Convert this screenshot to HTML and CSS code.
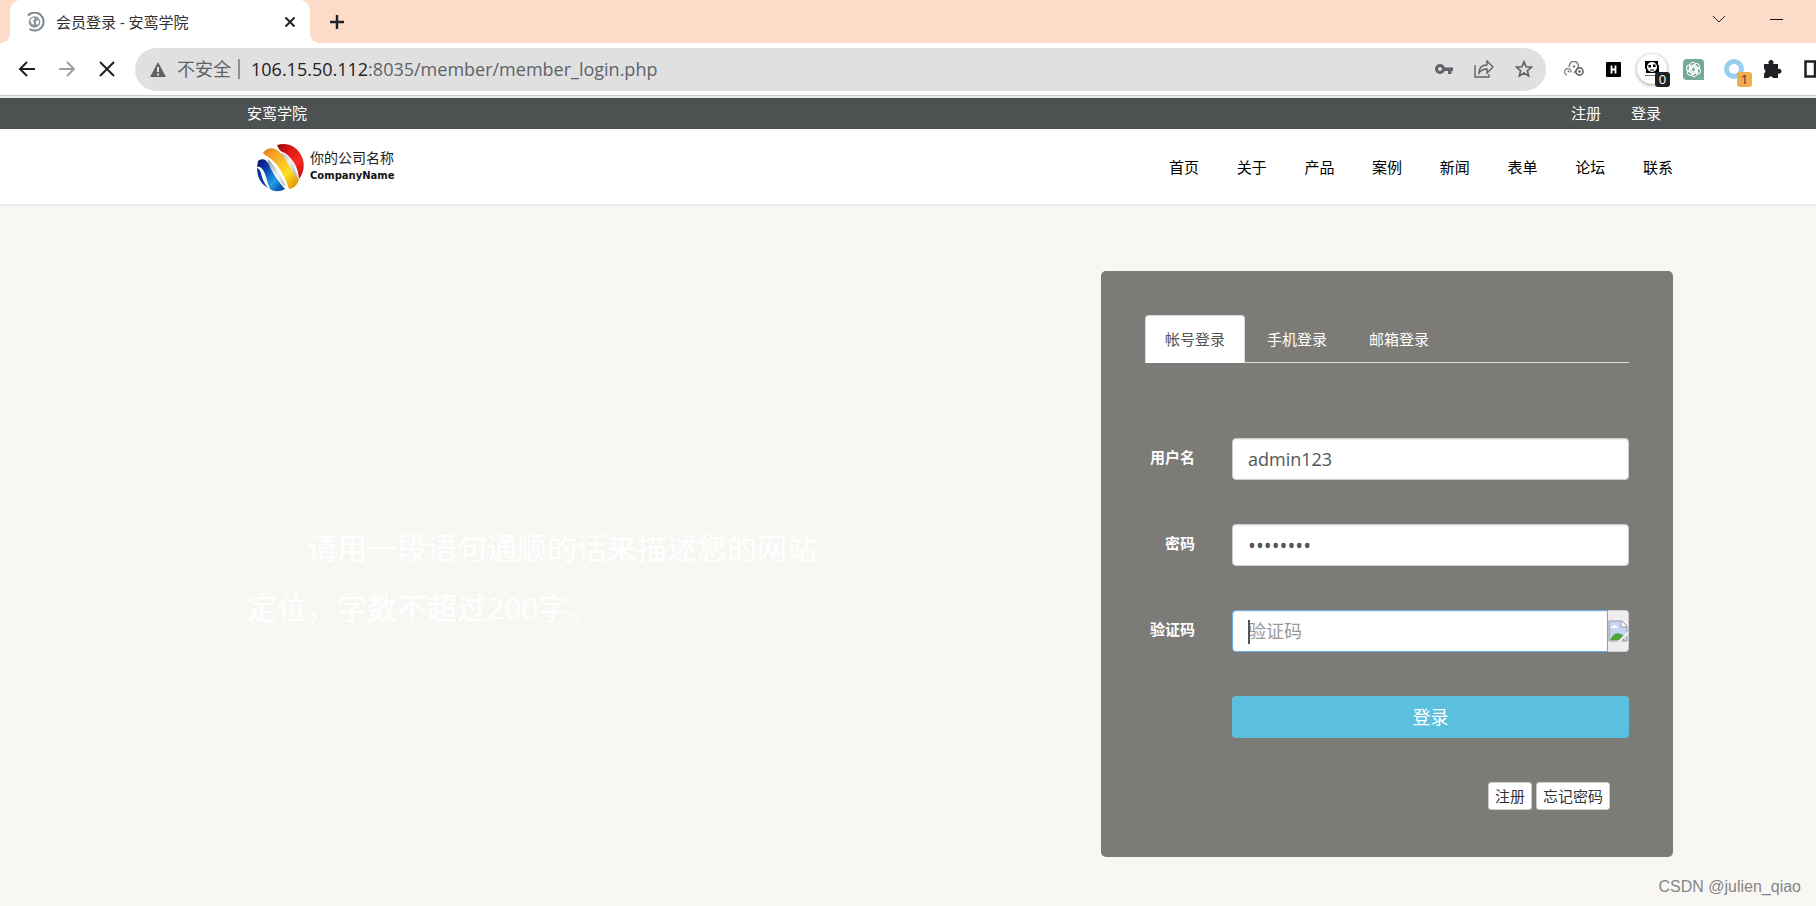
FILE: index.html
```html
<!DOCTYPE html>
<html lang="zh-CN">
<head>
<meta charset="utf-8">
<title>会员登录 - 安鸾学院</title>
<link rel="stylesheet" href="styles.css">
</head>
<body>
<div class="browser">
  <div class="tabstrip">
    <div class="tab">
      <svg class="favicon" width="20" height="20" viewBox="0 0 20 20"><path d="M2 3.500A9 9 0 1 1 3.500 17" fill="none" stroke="#7d838c" stroke-width="2"/><circle cx="8.500" cy="10" r="5.800" fill="#8c929a"/><path d="M4 8l3-2.500 2 1-1 1.500-1.500 1 1.500 1-.5 3-2-1.500zM10 9l3-1v3l-2 2-1-1z" fill="#fff"/></svg>
      <span class="tab-title">会员登录 - 安鸾学院</span>
      <button class="icon-btn" aria-label="关闭标签页"><svg width="12" height="12" viewBox="0 0 12 12"><path d="M1.500 1.500l9 9m0-9l-9 9" stroke="#202124" stroke-width="2"/></svg></button>
    </div>
    <button class="icon-btn new-tab" aria-label="新标签页"><svg width="16" height="16" viewBox="0 0 16 16"><path d="M8 1v14M1 8h14" stroke="#202124" stroke-width="2.400"/></svg></button>
    <div class="window-controls">
      <button class="icon-btn" aria-label="搜索标签页"><svg width="14" height="8" viewBox="0 0 14 8"><path d="M1 1l6 6 6-6" fill="none" stroke="#202124"/></svg></button>
      <button class="icon-btn" aria-label="最小化"><svg width="14" height="8" viewBox="0 0 14 8"><path d="M0 4.500h13" stroke="#111"/></svg></button>
    </div>
  </div>
  <div class="toolbar">
    <div class="nav-buttons">
      <button class="icon-btn" aria-label="后退"><svg width="18" height="18" viewBox="0 0 18 18"><path d="M17 9H2M9 2L2 9l7 7" fill="none" stroke="#202124" stroke-width="2"/></svg></button>
      <button class="icon-btn" aria-label="前进"><svg width="18" height="18" viewBox="0 0 18 18"><path d="M1 9h15M9 2l7 7-7 7" fill="none" stroke="#a0a0a0" stroke-width="2"/></svg></button>
      <button class="icon-btn" aria-label="停止"><svg width="18" height="18" viewBox="0 0 18 18"><path d="M2 2l14 14M16 2L2 16" stroke="#202124" stroke-width="2"/></svg></button>
    </div>
    <div class="address">
      <svg width="16" height="15" viewBox="0 0 16 15"><path d="M8 0l8 15H0z" fill="#5f6368"/><path d="M8 5v5M8 11.500v2" stroke="#e0e0e0" stroke-width="2"/></svg>
      <span class="insecure">不安全</span>
      <span class="url"><span class="host">106.15.50.112</span>:8035/member/member_login.php</span>
      <div class="address-actions">
        <button class="icon-btn" aria-label="密码"><svg width="18" height="10" viewBox="0 0 18 10"><circle cx="5" cy="5" r="3.500" fill="none" stroke="#5f6368" stroke-width="3"/><path d="M9 3.500h9v3.500h-1.500v3h-3.500V7H9z" fill="#5f6368"/></svg></button>
        <button class="icon-btn" aria-label="分享"><svg width="20" height="18" viewBox="0 0 20 18"><path d="M1 5v12h14v-3M5 13c0-5 3-8 8-8V1l6 6-6 6V9C9 9 7 10 5 13z" fill="none" stroke="#5f6368" stroke-width="1.400"/></svg></button>
        <button class="icon-btn" aria-label="收藏"><svg width="18" height="18" viewBox="0 0 18 18"><path d="M9 1.800l2.100 5 5.300.4-4 3.500 1.200 5.200L9 13.100l-4.600 2.800 1.200-5.200-4-3.500 5.300-.4z" fill="none" stroke="#5f6368" stroke-width="1.700"/></svg></button>
      </div>
    </div>
    <div class="extensions">
      <svg width="20" height="16" viewBox="0 0 20 16"><g fill="none" stroke-width="1.600"><path d="M3 14a3.200 3.200 0 1 1 4-2.500" stroke="#999"/><path d="M5.500 6a4.500 4.500 0 1 1 8 1.500L10 12" stroke="#888"/><circle cx="15.500" cy="10.500" r="3.600" stroke="#666"/></g><circle cx="10" cy="5.500" r="1.200" fill="#777"/><circle cx="4.500" cy="10.500" r="1" fill="#777"/><circle cx="15.500" cy="10.500" r="1.200" fill="#555"/></svg>
      <svg width="15" height="15" viewBox="0 0 15 15"><rect width="15" height="15" rx="1"/><path d="M5.500 3.500v8M9.500 3.500v8M5 7.500h5" stroke="#fff" stroke-width="1.800"/></svg>
      <span class="ext ext-round"><svg width="16" height="18" viewBox="0 0 16 18"><path d="M1 1h13v4h1v8H2V9H1z"/><ellipse cx="8" cy="7" rx="5" ry="5" fill="#fff"/><path d="M4.500 5h2.500v2.500H4.500zM9 4.500h2.500V7H9zM6 9.500h4v1H6z"/><path d="M1 15.500h12" stroke="#777"/></svg><span class="badge badge-dark">0</span></span>
      <svg width="21" height="21" viewBox="0 0 21 21"><path d="M4 0h13a4 4 0 0 1 4 4v17H4a4 4 0 0 1-4-4V4a4 4 0 0 1 4-4z" fill="#75a99c"/><g fill="none" stroke="#fff"><path id="petal" d="M6.500 12V6.500a3.300 3.300 0 0 1 6-1.800M8.500 11.500V8l4.500-2.500"/><use href="#petal" transform="rotate(60 10.500 10.500)"/><use href="#petal" transform="rotate(120 10.500 10.500)"/><use href="#petal" transform="rotate(180 10.500 10.500)"/><use href="#petal" transform="rotate(240 10.500 10.500)"/><use href="#petal" transform="rotate(300 10.500 10.500)"/></g></svg>
      <span class="ext ext-ring"><svg width="20" height="20" viewBox="0 0 20 20"><circle cx="10" cy="10" r="7.500" fill="none" stroke="#9acdf0" stroke-width="5"/></svg><span class="badge badge-amber">1</span></span>
      <svg width="19" height="19" viewBox="0 0 19 19"><path d="M1 4h5a2.500 2.500 0 1 1 4 0h5v5a2.500 2.500 0 1 1 0 4.500V18h-5a2.500 2.500 0 0 0-4.500 0H1v-4.500a2.500 2.500 0 0 0 0-4.500z" fill="#202124"/></svg>
      <svg width="12" height="18" viewBox="0 0 12 18"><path d="M12 1.500H1.500v15H12M11 1v16" fill="none" stroke="#202124" stroke-width="2.500"/></svg>
    </div>
  </div>
</div>
<div class="topbar">
  <div class="container">
    <a href="#">安鸾学院</a>
    <div class="account"><a href="#">注册</a><a href="#">登录</a></div>
  </div>
</div>
<header class="site-header">
  <div class="container">
    <a class="brand" href="#">
      <svg width="48" height="48" viewBox="0 0 48 48">
        <defs>
          <linearGradient id="blue" x1="0" y1="0" x2="1" y2="1"><stop offset="0" stop-color="#050a6e"/><stop offset=".35" stop-color="#0b48b4"/><stop offset=".65" stop-color="#1fa0e8"/><stop offset="1" stop-color="#0a2f8c"/></linearGradient>
          <linearGradient id="gold" x1="0" y1="0" x2="1" y2="1"><stop offset="0" stop-color="#e07a10"/><stop offset=".25" stop-color="#f6a62c"/><stop offset=".65" stop-color="#ffe01c"/><stop offset="1" stop-color="#d97909"/></linearGradient>
          <linearGradient id="red" x1="0" y1="0" x2="1" y2="1"><stop offset="0" stop-color="#8c0808"/><stop offset=".3" stop-color="#d81414"/><stop offset=".65" stop-color="#fb2a20"/><stop offset="1" stop-color="#b00a08"/></linearGradient>
          <linearGradient id="silver" x1="0" y1="0" x2="1" y2="1"><stop offset="0" stop-color="#8a8a8a"/><stop offset=".5" stop-color="#eee"/><stop offset="1" stop-color="#999"/></linearGradient>
        </defs>
        <path d="M24 9c5 1 9 5 12 10l5 15-3 1-14-22zM11 15c4 3 14 18 18 27l-3-1L11 20z" fill="url(#silver)"/>
        <path d="M20 1c10-3 20 1 25 12 3 7 2 16-3 22-1-12-6-20-14-26-4-1-6-3-8-8z" fill="url(#red)"/>
        <path d="M6 9c3-5 9-6 14-3 7 5 10 12 15 21 2 4 5 7 7 8-1 5-4 9-10 10-4-12-9-22-17-29-3-3-6-4-9-7z" fill="url(#gold)"/>
        <path d="M1 17c4-3 8-2 10 2 4 8 8 16 17 26-5 3-11 3-15 0-3-7-4-15-7-19-2-3-4-4-6-3z" fill="url(#blue)"/>
        <path d="M0 24c3 1 4 4 5 9 1 4 3 7 6 11C4 40 0 33 0 24z" fill="#0e36a0"/>
      </svg>
      <span class="brand-text"><span class="brand-cn">你的公司名称</span><span class="brand-en">CompanyName</span></span>
    </a>
    <nav class="site-nav"><a href="#">首页</a><a href="#">关于</a><a href="#">产品</a><a href="#">案例</a><a href="#">新闻</a><a href="#">表单</a><a href="#">论坛</a><a href="#">联系</a></nav>
  </div>
</header>
<main class="container main">
  <p class="slogan">请用一段语句通顺的话来描述您的网站定位，字数不超过200字。</p>
  <section class="panel">
    <div class="login-tabs" role="tablist">
      <button role="tab" aria-selected="true" class="login-tab active">帐号登录</button><button role="tab" class="login-tab">手机登录</button><button role="tab" class="login-tab">邮箱登录</button>
    </div>
    <form class="login-form">
      <div class="row"><label for="user">用户名</label><input class="field" id="user" type="text" value="admin123"></div>
      <div class="row"><label for="pass">密码</label><input class="field password" id="pass" type="password" value="admin123"></div>
      <div class="row"><label for="code">验证码</label>
        <div class="code-group"><input class="field code" id="code" type="text" placeholder="验证码"><span class="caret"></span>
          <span class="captcha"><svg width="20" height="22" viewBox="0 0 20 22"><path d="M1 1h13l5 5v15H1z" fill="#c4d5f5" stroke="#999"/><path d="M13 1v6h6" fill="#fff" stroke="#999"/><path d="M3 8c0-2 2-2 3-3 2 0 3 1 4 3z" fill="#fff"/><path d="M2 20c3-7 8-9 14-4v4z" fill="#4ea636"/><path d="M20 11v4l-8 7H9z" fill="#eee"/></svg></span>
        </div>
      </div>
      <button class="submit" type="submit">登录</button>
      <div class="links"><a class="small-btn" href="#">注册</a><a class="small-btn" href="#">忘记密码</a></div>
    </form>
  </section>
</main>
<div class="watermark">CSDN @julien_qiao</div>
</body>
</html>
```
FILE: styles.css
```css
* { box-sizing: border-box; }
body {
  margin: 0;
  min-height: 100vh;
  background: #f8f7f3;
  font-family: "Open Sans", "Noto Sans CJK SC", sans-serif;
  font-size: 15px;
  line-height: 22px;
  overflow-x: hidden;
  position: relative;
}
a { color: inherit; text-decoration: none; }
svg { display: block; flex: none; }
button, input { font: inherit; }
.icon-btn { border: 0; padding: 0; background: none; }
.container {
  margin: 0 143px 0 247px;
  display: flex;
  justify-content: space-between;
  align-items: center;
}

/* Browser frame */
.browser { background: #fff; border-bottom: 2px solid #ececec; }
.tabstrip { display: flex; align-items: center; height: 43px; padding-left: 10px; background: #fcdbc8; }
.tab {
  display: flex;
  align-items: center;
  gap: 10px;
  width: 300px;
  height: 43px;
  padding: 0 14px 0 16px;
  background: #fff;
  border-radius: 10px 10px 0 0;
  position: relative;
}
.tab::before, .tab::after {
  content: "";
  position: absolute;
  bottom: 0;
  width: 10px;
  height: 10px;
}
.tab::before { right: 100%; background: radial-gradient(circle at 0 0, #fcdbc8 10px, #fff 10px); }
.tab::after { left: 100%; background: radial-gradient(circle at 100% 0, #fcdbc8 10px, #fff 10px); }
.tab-title { flex: 1; font-size: 15px; color: #303030; }
.new-tab { margin-left: 19px; }
.window-controls { display: flex; gap: 44px; margin: 0 32px 6px auto; }
.toolbar { display: flex; align-items: center; height: 53px; border-bottom: 1px solid #c9c9c9; overflow: hidden; }
.nav-buttons { display: flex; gap: 22px; padding: 0 19px 0 18px; }
.address {
  flex: 1;
  display: flex;
  align-items: center;
  height: 43px;
  padding: 0 13px 0 15px;
  border-radius: 22px;
  background: #e0e0e0;
  color: #5f6368;
  font-size: 18px;
}
.insecure { margin-left: 11px; padding-right: 7px; line-height: 20px; border-right: 2px solid #909090; }
.url { margin-left: 11px; }
.host { color: #202124; }
.address-actions { display: flex; align-items: center; gap: 21px; margin-left: auto; }
.extensions { display: flex; align-items: center; gap: 22px; margin: 0 0 0 18px; }
.ext { position: relative; }
.ext-round {
  display: grid;
  place-items: center;
  width: 30px;
  height: 30px;
  margin: 0 -6px;
  border-radius: 50%;
  box-shadow: 0 1px 4px #999;
}
.ext-ring { margin: 0 -3px 0 -2px; }
.badge {
  position: absolute;
  right: -3px;
  bottom: -3px;
  width: 15px;
  height: 15px;
  border-radius: 3px;
  font-size: 13px;
  line-height: 15px;
  text-align: center;
}
.badge-dark { background: #202124; color: #fff; }
.badge-amber { right: -8px; bottom: -8px; background: #f0ad4e; color: #333; }

/* Site header */
.topbar { background: #4d5151; color: #fff; line-height: 31px; }
.account { display: flex; gap: 30px; padding-right: 12px; }
.site-header { background: #fff; border-bottom: 2px solid #eee; }
.site-header .container { height: 75px; }
.brand { display: flex; align-items: center; gap: 5px; padding: 3px 0 0 10px; }
.brand-text { display: flex; flex-direction: column; padding-bottom: 2px; }
.brand-cn { font-size: 14px; line-height: 18px; color: #222; }
.brand-en { font-family: "DejaVu Sans", sans-serif; font-size: 10px; font-weight: 700; line-height: 18px; color: #111; }
.site-nav { display: flex; justify-content: space-between; flex: 0 1 504px; color: #000; }

/* Login */
.main { padding: 65px 0 48px; }
.slogan { flex: 0 1 574px; margin: 28px 0 0; font-size: 30px; line-height: 60px; text-indent: 60px; color: #fff; }
.panel { flex: 0 1 572px; padding: 44px 44px 47px; border-radius: 5px; background: #7d7b78; color: #fff; }
.login-tabs { display: flex; gap: 2px; border-bottom: 1px solid #ddd; }
.login-tab {
  margin-bottom: -1px;
  padding: 12px 19px;
  border: 1px solid transparent;
  border-bottom: 0;
  border-radius: 4px 4px 0 0;
  background: none;
  color: #fff;
  line-height: 23px;
}
.login-tab.active { background: #fff; border-color: #ddd; color: #555; }
.login-form { display: flex; flex-direction: column; gap: 44px; padding-top: 75px; }
.row { display: grid; grid-template-columns: 50px 1fr; column-gap: 37px; }
.row label { padding-top: 8px; text-align: right; font-weight: 700; white-space: nowrap; }
.field {
  width: 100%;
  min-width: 0;
  height: 42px;
  padding: 0 15px;
  border: 1px solid #ccc;
  border-radius: 4px;
  background: #fff;
  box-shadow: inset 0 1px 1px rgba(0, 0, 0, .075);
  color: #555;
  font-size: 18px;
}
.password { font-size: 21px; }
.field::placeholder { color: #999; opacity: 1; }
.code-group { display: flex; position: relative; }
.code { flex: 1; border-color: #66afe9; border-radius: 4px 0 0 4px; }
.caret { position: absolute; left: 16px; top: 10px; width: 2px; height: 24px; background: #555; }
.captcha { display: grid; place-items: center; width: 21px; border: 1px solid #ccc; border-left: 0; border-radius: 0 4px 4px 0; background: #eee; }
.submit { height: 42px; margin-left: 87px; border: 0; border-radius: 4px; background: #5bc0de; color: #fff; font-size: 18px; }
.links { display: flex; justify-content: flex-end; gap: 4px; padding-right: 19px; }
.small-btn { padding: 2px 6px; border: 1px solid #ccc; border-radius: 3px; background: #fff; color: #333; }
.watermark { position: absolute; right: 15px; bottom: 8px; font-family: "Liberation Sans", sans-serif; font-size: 16px; color: #858585; }
```
